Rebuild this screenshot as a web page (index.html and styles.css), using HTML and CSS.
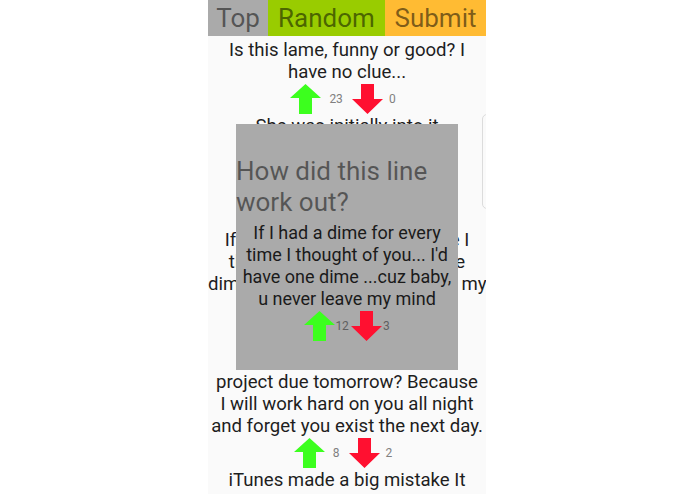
FILE: index.html
```html
<!DOCTYPE html>
<html>
<head>
<meta charset="utf-8">
<link rel="stylesheet" href="styles.css">
</head>
<body>
<div class="app">
  <nav class="tabs">
    <div class="tab tab-top">Top</div>
    <div class="tab tab-random">Random</div>
    <div class="tab tab-submit">Submit</div>
  </nav>
  <div class="list">
    <div class="item">
      <p class="line">Is this lame, funny or good? I<br>have no clue...</p>
      <div class="votes">
        <svg class="arrow" viewBox="0 0 31 30"><polygon fill="#3cff1e" points="15.5,0 31,14 22,14 22,30 9,30 9,14 0,14"/></svg>
        <span class="count">23</span>
        <svg class="arrow down" viewBox="0 0 31 30"><polygon fill="#ff1030" points="9,0 22,0 22,15 31,15 15.5,30 0,15 9,15"/></svg>
        <span class="count last">0</span>
      </div>
    </div>
    <div class="item item-gap">
      <p class="line">She was initially into it<br>but then she found out<br>I was a programmer</p>
      <div class="votes">
        <svg class="arrow" viewBox="0 0 31 30"><polygon fill="#3cff1e" points="15.5,0 31,14 22,14 22,30 9,30 9,14 0,14"/></svg>
        <span class="count">5</span>
        <svg class="arrow down" viewBox="0 0 31 30"><polygon fill="#ff1030" points="9,0 22,0 22,15 31,15 15.5,30 0,15 9,15"/></svg>
        <span class="count last">1</span>
      </div>
    </div>
    <div class="item">
      <p class="line">If I had a dime for every time I<br>thought of you... I'd have one<br>dime ...cuz baby, u never leave my<br>mind</p>
      <div class="votes">
        <svg class="arrow" viewBox="0 0 31 30"><polygon fill="#3cff1e" points="15.5,0 31,14 22,14 22,30 9,30 9,14 0,14"/></svg>
        <span class="count">12</span>
        <svg class="arrow down" viewBox="0 0 31 30"><polygon fill="#ff1030" points="9,0 22,0 22,15 31,15 15.5,30 0,15 9,15"/></svg>
        <span class="count last">3</span>
      </div>
    </div>
    <div class="item">
      <p class="line">Are you my science<br>project due tomorrow? Because<br>I will work hard on you all night<br>and forget you exist the next day.</p>
      <div class="votes">
        <svg class="arrow" viewBox="0 0 31 30"><polygon fill="#3cff1e" points="15.5,0 31,14 22,14 22,30 9,30 9,14 0,14"/></svg>
        <span class="count">8</span>
        <svg class="arrow down" viewBox="0 0 31 30"><polygon fill="#ff1030" points="9,0 22,0 22,15 31,15 15.5,30 0,15 9,15"/></svg>
        <span class="count last">2</span>
      </div>
    </div>
    <div class="item">
      <p class="line">iTunes made a big mistake It<br>said I have to accept their terms</p>
    </div>
  </div>
  <div class="scroll-hint"></div>
  <div class="modal">
    <h2 class="modal-title">How did this line work out?</h2>
    <p class="modal-text">If I had a dime for every time I thought of you... I'd have one dime ...cuz baby, u never leave my mind</p>
    <div class="votes votes-tight">
      <svg class="arrow" viewBox="0 0 31 30"><polygon fill="#3cff1e" points="15.5,0 31,14 22,14 22,30 9,30 9,14 0,14"/></svg>
      <span class="count">12</span>
      <svg class="arrow down" viewBox="0 0 31 30"><polygon fill="#ff1030" points="9,0 22,0 22,15 31,15 15.5,30 0,15 9,15"/></svg>
      <span class="count last">3</span>
    </div>
  </div>
</div>
</body>
</html>
```

FILE: styles.css
```css
html, body {
  margin: 0;
  padding: 0;
  background: #ffffff;
  font-family: Roboto, "Noto Sans", "Liberation Sans", sans-serif;
}

.app {
  position: relative;
  width: 278px;
  height: 494px;
  margin-left: 208px;
  background: #fafafa;
  overflow: hidden;
}

.tabs {
  display: flex;
  height: 36px;
}

.tab {
  font-size: 26px;
  line-height: 36px;
  text-align: center;
  color: rgba(0, 0, 0, 0.52);
}

.tab-top { width: 60px; background: #aaaaaa; }
.tab-random { width: 117px; background: #99cc00; }
.tab-submit { width: 101px; background: #ffbb33; }

.list {
  padding-top: 3px;
}

.line {
  margin: 0;
  font-size: 18.6px;
  line-height: 22px;
  text-align: center;
  white-space: nowrap;
  color: #1e1e1e;
}

.item-gap {
  padding-bottom: 16px;
}

.votes {
  display: flex;
  align-items: center;
  justify-content: center;
  height: 32px;
  padding-right: 8px;
}

.arrow {
  width: 31px;
  height: 30px;
  display: block;
}

.count {
  font-size: 12px;
  color: #808080;
  margin-left: 8px;
}

.arrow.down {
  margin-left: 9px;
}

.count.last {
  margin-left: 6px;
}

.scroll-hint {
  position: absolute;
  left: 274px;
  top: 114px;
  width: 20px;
  height: 93px;
  border: 1px solid #dcdcdc;
  border-radius: 5px;
}

.modal {
  position: absolute;
  left: 28px;
  top: 124px;
  width: 222px;
  height: 246px;
  background: #aaaaaa;
}

.modal-title {
  margin: 32px 0 0 0;
  font-size: 26px;
  line-height: 31px;
  font-weight: normal;
  color: rgba(0, 0, 0, 0.5);
}

.modal-text {
  margin: 4px 0 0 0;
  font-size: 18px;
  line-height: 22px;
  text-align: center;
  color: #1a1a1a;
}

.votes-tight {
  padding-right: 0;
  height: 31px;
}

.votes-tight .count {
  margin-left: 0;
  color: #606060;
}

.votes-tight .arrow.down {
  margin-left: 2px;
}

.votes-tight .count.last {
  margin-left: 1px;
}
```
